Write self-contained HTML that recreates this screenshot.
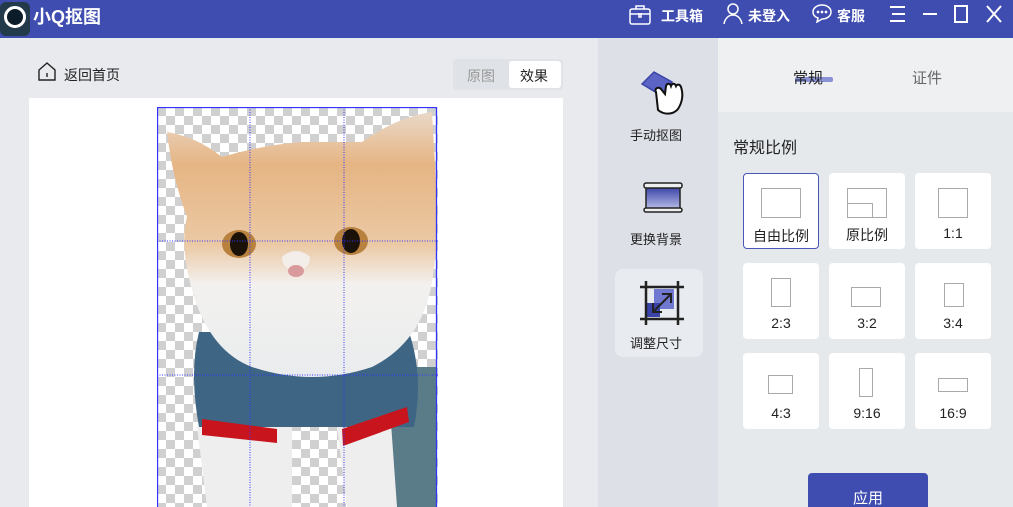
<!DOCTYPE html><html><head><meta charset="utf-8"><style>
*{margin:0;padding:0;box-sizing:border-box}
html,body{width:1013px;height:507px;overflow:hidden}
body{position:relative;background:#e8eaed;font-family:"Liberation Sans","Noto Sans CJK SC",sans-serif;color:#222}
.a{position:absolute}
.top{left:0;top:0;width:1013px;height:38px;background:#3f4db0;color:#fff}
.card{position:absolute;width:76px;height:76px;background:#fff;border-radius:4px}
.card .s{position:absolute;border:1.3px solid #aaa}
.card .t{position:absolute;left:0;width:76px;top:52px;text-align:center;font-size:14px;color:#222}
</style></head><body>
<div class="a top">
 <div class="a" style="left:0;top:2px;width:30px;height:34px;background:#233a4a;border-radius:6px"></div>
 <div class="a" style="left:4px;top:6px;width:22px;height:22px;border-radius:50%;border:3px solid #fff;background:#0c1c28"></div>
 <div class="a" style="left:33px;top:3px;font-size:18px;font-weight:bold">小Q抠图</div>
 <svg class="a" style="left:628px;top:4px" width="24" height="22" viewBox="0 0 24 22" fill="none" stroke="#fff" stroke-width="1.5"><rect x="2" y="5" width="20" height="15" rx="2"/><path d="M8 5V2h8v3M2 10h20M11 9v4h2V9"/></svg>
 <div class="a" style="left:661px;top:6px;font-size:14px;font-weight:bold">工具箱</div>
 <svg class="a" style="left:722px;top:2px" width="22" height="24" viewBox="0 0 22 24" fill="none" stroke="#fff" stroke-width="1.5"><circle cx="11" cy="7" r="5"/><path d="M2 22c1-6 5-9 9-9s8 3 9 9"/></svg>
 <div class="a" style="left:748px;top:6px;font-size:14px;font-weight:bold">未登入</div>
 <svg class="a" style="left:811px;top:3px" width="22" height="20" viewBox="0 0 22 20" fill="none" stroke="#fff" stroke-width="1.5"><path d="M11 2c5 0 9 3 9 7s-4 7-9 7l-5 3 1-4c-3-1-5-3-5-6 0-4 4-7 9-7z"/><circle cx="7" cy="9" r=".6" fill="#fff"/><circle cx="11" cy="9" r=".6" fill="#fff"/><circle cx="15" cy="9" r=".6" fill="#fff"/></svg>
 <div class="a" style="left:837px;top:6px;font-size:14px;font-weight:bold">客服</div>
 <svg class="a" style="left:888px;top:4px" width="120" height="20" viewBox="0 0 120 20" fill="none" stroke="#fff" stroke-width="2"><path d="M2 3h15M4 10h13M2 17h15M35 10h14M67 2h12v16H67zM99 2l14 16M113 2L99 18"/></svg>
</div>
<svg class="a" style="left:37px;top:61px" width="20" height="20" viewBox="0 0 20 20" fill="none" stroke="#222" stroke-width="1.4"><path d="M2 9l8-7 8 7v10H2z"/><path d="M10 12v4"/></svg>
<div class="a" style="left:64px;top:65px;font-size:14px">返回首页</div>
<div class="a" style="left:453px;top:59px;width:110px;height:31px;background:#dfe2e6;border-radius:4px"></div>
<div class="a" style="left:467px;top:66px;font-size:14px;color:#999">原图</div>
<div class="a" style="left:509px;top:61px;width:52px;height:27px;background:#fff;border-radius:3px"></div>
<div class="a" style="left:520px;top:66px;font-size:14px">效果</div>
<div class="a" style="left:29px;top:98px;width:534px;height:409px;background:#fff"></div>
<svg class="a" style="left:157px;top:107px" width="281" height="400" viewBox="0 0 281 400">
 <defs><pattern id="c" width="18" height="18" patternUnits="userSpaceOnUse"><rect width="18" height="18" fill="#fff"/><rect width="9" height="9" fill="#d0d0d0"/><rect x="9" y="9" width="9" height="9" fill="#d0d0d0"/></pattern>
 <linearGradient id="f" x1="0" y1="0" x2="0" y2="1"><stop offset="0" stop-color="#e9d8c8"/><stop offset=".2" stop-color="#e6b583"/><stop offset=".5" stop-color="#ebc9a5"/><stop offset=".65" stop-color="#f3f1ef"/><stop offset="1" stop-color="#e9ecee"/></linearGradient></defs>
 <rect width="281" height="400" fill="url(#c)"/>
 <path d="M40 320h95v80H50zM180 320h100v80H190z" fill="#eeeeee"/>
 <path d="M230 260h50v140h-40z" fill="#5a7c88"/>
 <path d="M42 225q-10 40 0 95h215q10-50-5-95z" fill="#3e6684"/>
 <path d="M45 312l75 10 0 14-75-8zM185 322l65-22 2 15-66 24z" fill="#c8141c"/>
 <path d="M10 25q30 5 55 25q40-12 80-15q40 0 60 0q35-25 70-30q3 50 5 90q2 40-5 80q-10 60-60 85q-60 20-120 0q-40-15-58-70Q22 140 30 110 15 70 10 25z" fill="url(#f)"/>
 <ellipse cx="82" cy="137" rx="17" ry="14" fill="#b8823e"/><ellipse cx="82" cy="137" rx="9" ry="12" fill="#1a1208"/>
 <ellipse cx="194" cy="134" rx="17" ry="14" fill="#b8823e"/><ellipse cx="194" cy="134" rx="9" ry="12" fill="#1a1208"/>
 <path d="M125 150q14-12 28 0 0 12-14 15-14-3-14-15z" fill="#f4eeea"/>
 <ellipse cx="139" cy="164" rx="8" ry="6" fill="#d89a9a"/>
 <g stroke="#33f" stroke-width="1" stroke-dasharray="1 1.5"><path d="M0 134h281M0 268h281M93 0v400M187 0v400"/></g>
 <rect x=".5" y=".5" width="279" height="410" fill="none" stroke="#33f" stroke-width="1.3"/>
</svg>
<div class="a" style="left:598px;top:38px;width:120px;height:469px;background:#dde0e6"></div>
<svg class="a" style="left:638px;top:70px" width="50" height="48" viewBox="0 0 50 48"><path d="M4 14L16 2l18 10-10 14z" fill="#5b64c4" stroke="#3a44a8" stroke-width="1.5"/><path d="M18 22c-2-3 2-6 5-3l4 5 1-8c1-3 4-3 5 0 1-3 4-3 5 0 1-2 4-2 5 1 2 6 2 14-3 22-5 6-14 6-20 1z" fill="#fff" stroke="#111" stroke-width="2"/></svg>
<div class="a" style="left:630px;top:125px;font-size:13px">手动抠图</div>
<svg class="a" style="left:643px;top:182px" width="40" height="32" viewBox="0 0 40 32"><defs><linearGradient id="g" x1="0" y1="0" x2="0" y2="1"><stop offset="0" stop-color="#3941a6"/><stop offset="1" stop-color="#b8bde8"/></linearGradient></defs><rect x="3" y="5" width="34" height="22" fill="url(#g)" stroke="#222" stroke-width="1.5"/><rect x="1" y="1" width="38" height="5" rx="2" fill="#eee" stroke="#222" stroke-width="1.5"/><rect x="1" y="26" width="38" height="4" rx="2" fill="#eee" stroke="#222" stroke-width="1.5"/></svg>
<div class="a" style="left:630px;top:229px;font-size:13px">更换背景</div>
<div class="a" style="left:615px;top:269px;width:88px;height:88px;background:#e8ebef;border-radius:8px"></div>
<svg class="a" style="left:640px;top:281px" width="44" height="44" viewBox="0 0 44 44"><rect x="14" y="8" width="20" height="20" fill="#7078d0"/><rect x="6" y="22" width="14" height="14" fill="#3a44a8"/><path d="M6 0v44M38 0v44M0 6h44M0 38h44" stroke="#222" stroke-width="2.5"/><path d="M13 31l18-18M22 13h9v9M13 22v9h9" stroke="#222" stroke-width="2" fill="none"/></svg>
<div class="a" style="left:630px;top:333px;font-size:13px">调整尺寸</div>
<div class="a" style="left:718px;top:38px;width:295px;height:74px;background:#eef0f2"></div>
<div class="a" style="left:718px;top:112px;width:295px;height:395px;background:#e6e9ec"></div>
<div class="a" style="left:795px;top:77px;width:38px;height:5px;background:#8a92d6;border-radius:2px"></div>
<div class="a" style="left:793px;top:67px;font-size:15px">常规</div>
<div class="a" style="left:912px;top:67px;font-size:15px;color:#666">证件</div>
<div class="a" style="left:733px;top:134px;font-size:16px">常规比例</div>
<div class="card" style="left:743px;top:173px;border:1.3px solid #4a55b8"><div class="s" style="left:17px;top:14px;width:40px;height:30px"></div><div class="t" style="top:52px;left:-1px">自由比例</div></div>
<div class="card" style="left:829px;top:173px"><div class="s" style="left:18px;top:15px;width:40px;height:30px"></div><div class="s" style="left:18px;top:30px;width:26px;height:15px"></div><div class="t">原比例</div></div>
<div class="card" style="left:915px;top:173px"><div class="s" style="left:23px;top:15px;width:30px;height:30px"></div><div class="t">1:1</div></div>
<div class="card" style="left:743px;top:263px"><div class="s" style="left:28px;top:15px;width:20px;height:29px"></div><div class="t">2:3</div></div>
<div class="card" style="left:829px;top:263px"><div class="s" style="left:22px;top:24px;width:30px;height:20px"></div><div class="t">3:2</div></div>
<div class="card" style="left:915px;top:263px"><div class="s" style="left:29px;top:20px;width:20px;height:24px"></div><div class="t">3:4</div></div>
<div class="card" style="left:743px;top:353px"><div class="s" style="left:25px;top:22px;width:25px;height:19px"></div><div class="t">4:3</div></div>
<div class="card" style="left:829px;top:353px"><div class="s" style="left:30px;top:15px;width:14px;height:29px"></div><div class="t">9:16</div></div>
<div class="card" style="left:915px;top:353px"><div class="s" style="left:23px;top:25px;width:30px;height:14px"></div><div class="t">16:9</div></div>
<div class="a" style="left:808px;top:473px;width:120px;height:34px;background:#3f4db0;border-radius:4px 4px 0 0;color:#fff;font-size:15px;text-align:center;padding-top:14px">应用</div>
</body></html>
